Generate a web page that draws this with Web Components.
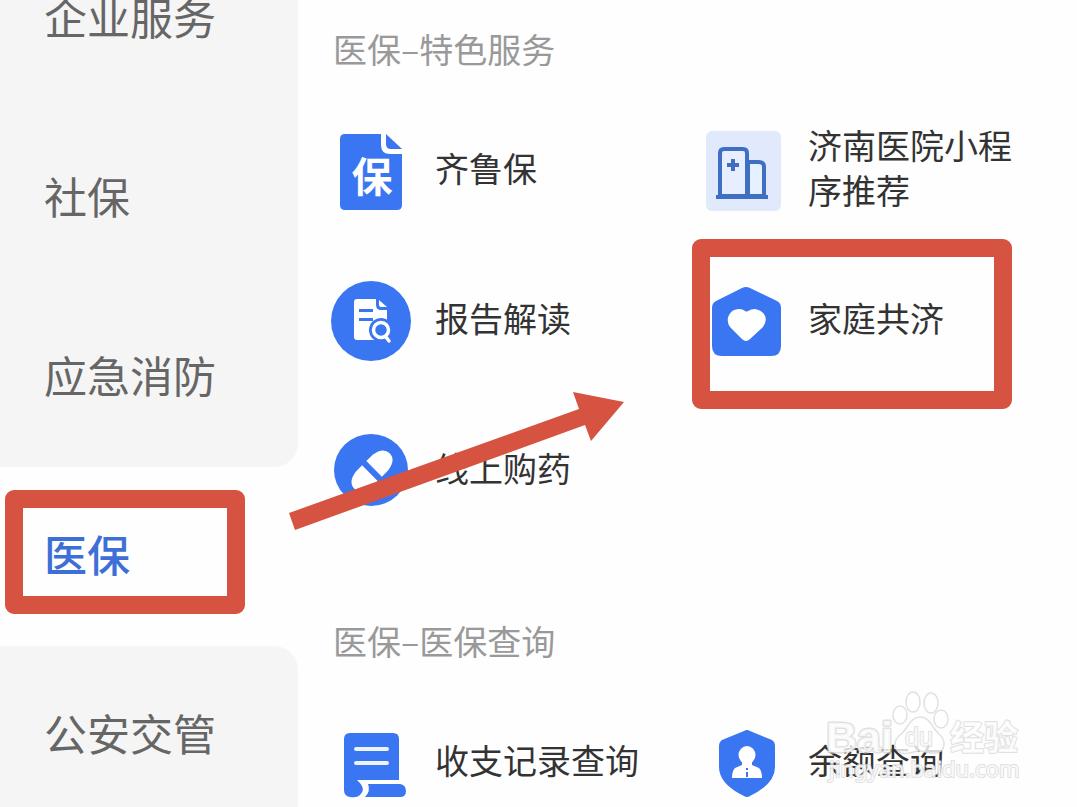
<!DOCTYPE html>
<html lang="zh-CN">
<head>
<meta charset="utf-8">
<meta name="viewport" content="width=device-width, initial-scale=1">
<title>医保服务</title>
<style>
  html, body { height: 100%; }
  body { margin: 0; background: #fefefe; overflow: hidden; font-family: "Noto Sans CJK SC", "Noto Sans", sans-serif; }
</style>
</head>
<body>
<service-page>
  <side-nav slot="nav">
    <side-item>企业服务</side-item>
    <side-item>社保</side-item>
    <side-item before>应急消防</side-item>
    <side-item active>医保</side-item>
    <side-item after>公安交管</side-item>
  </side-nav>
  <service-section heading="医保–特色服务">
    <service-item icon="policy">齐鲁保</service-item>
    <service-item icon="hospital">济南医院小程序推荐</service-item>
    <service-item icon="report">报告解读</service-item>
    <service-item icon="family" marked>家庭共济</service-item>
    <service-item icon="pill">线上购药</service-item>
  </service-section>
  <service-section heading="医保–医保查询">
    <service-item icon="ledger">收支记录查询</service-item>
    <service-item icon="balance">余额查询</service-item>
  </service-section>
  <pointer-arrow slot="overlay"></pointer-arrow>
  <site-watermark slot="overlay"></site-watermark>
</service-page>

<script>
const define = (name, html, setup) => {
  const template = document.createElement('template');
  template.innerHTML = html;
  customElements.define(name, class extends HTMLElement {
    constructor() {
      super();
      this.attachShadow({ mode: 'open' }).append(template.content.cloneNode(true));
    }
    connectedCallback() { if (setup) setup(this, this.shadowRoot); }
  });
};

const icons = {
  policy: `<svg width="80" height="80" viewBox="0 0 80 80">
    <path fill="#3a76f2" d="M14 3H50V14Q50 23 59 23H71V74Q71 79 66 79H14Q9 79 9 74V8Q9 3 14 3Z"/>
    <path fill="#3a76f2" d="M55 3L71 18H60Q55 18 55 13Z"/>
    <text x="41" y="61" text-anchor="middle" font-size="41" font-weight="700" fill="#fff">保</text></svg>`,
  hospital: `<svg width="80" height="80" viewBox="0 0 80 80">
    <rect x="2" y="0" width="75" height="80" rx="6" fill="#e0eafc"/>
    <g fill="none" stroke="#3e6fc2" stroke-width="4" stroke-linejoin="round">
      <path fill="#e6f1ff" d="M44 31H55Q60 31 60 36V65H44Z"/>
      <path fill="#e6eeff" d="M16 65V22Q16 18 20 18H39Q43 18 43 22V65Z"/>
      <path d="M12 66H64M23 34H35M29 28V40"/>
    </g></svg>`,
  report: `<svg width="80" height="80" viewBox="0 0 80 80">
    <circle cx="40" cy="40" r="40" fill="#3a76f2"/>
    <path fill="#fff" d="M26 18H45V24Q45 29 50 29H56V59H26Q23 59 23 56V21Q23 18 26 18Z"/>
    <path fill="#fff" d="M48 19L56 26H50Q48 26 48 24Z"/>
    <path stroke="#3a76f2" stroke-width="3" d="M28 29.500H42M28 38.500H42"/>
    <circle cx="50" cy="49" r="12" fill="#3a76f2"/>
    <circle cx="50" cy="49" r="7.500" fill="#3a76f2" stroke="#fff" stroke-width="3.500"/>
    <path stroke="#fff" stroke-width="3.500" stroke-linecap="round" d="M55 56L58 60"/></svg>`,
  family: `<svg width="80" height="80" viewBox="0 0 80 80">
    <path fill="#3a76f2" d="M38 7Q42 5 46 7L73 20Q77 22 77 27V65Q77 75 67 75H18Q8 75 8 65V27Q8 22 12 20Z"/>
    <path fill="#fff" d="M42 60Q40 60 38 58L26 46Q22 40 25 34Q28 28 35 28Q39 28 41 30Q42 31 44 30Q47 28 51 28Q57 29 60 33Q64 39 59 46L46 58Q44 60 42 60Z"/></svg>`,
  pill: `<svg width="80" height="80" viewBox="0 0 80 80">
    <ellipse cx="40" cy="39" rx="37" ry="36" fill="#3a76f2"/>
    <g transform="translate(41 40) rotate(-45)" fill="#fff">
      <path d="M-3 -11V11H-12Q-25 9 -25 0T-12 -11ZM3 -11V11H12Q25 9 25 0T12 -11Z"/>
    </g></svg>`,
  ledger: `<svg width="80" height="80" viewBox="0 0 80 80">
    <path fill="#3a76f2" d="M19 10H62Q68 10 68 16V57H26Q36 66 29 72Q26 75 19 74Q13 73 13 67V16Q13 10 19 10Z"/>
    <path fill="#3a76f2" d="M37 61H69Q75 62 75 68Q75 74 69 74H34Q40 68 37 61Z"/>
    <path stroke="#eef4ff" stroke-width="4" stroke-linecap="round" d="M25 26H56M25 40H56"/></svg>`,
  balance: `<svg width="80" height="80" viewBox="0 0 80 80">
    <path fill="#3a76f2" d="M40 8Q43 6 46 8L68 17Q71 19 71 23V44Q71 61 46 73Q43 75 40 73Q15 61 15 44V23Q15 19 18 17Z"/>
    <ellipse cx="43" cy="32" rx="8.500" ry="9" fill="#fff"/>
    <path fill="#fff" d="M38 36H48V42L55 45Q58 48 58 55H28Q28 48 31 45L38 42Z"/>
    <path stroke="#3a76f2" stroke-width="2" d="M43 45V47M43 49V54"/></svg>`
};

define('service-page', `
  <style>
    :host { display: grid; grid-template-columns: 298px 1fr; height: 100vh; position: relative; overflow: hidden; }
    main { padding: 8px 0 0 33px; }
  </style>
  <slot name="nav"></slot>
  <main><slot></slot></main>
  <slot name="overlay"></slot>`);

define('side-nav', `
  <style>
    :host { display: block; }
    nav { margin-top: -70px; }
  </style>
  <nav aria-label="服务分类"><slot></slot></nav>`);

define('side-item', `
  <style>
    :host { display: block; position: relative; background: #f5f5f5; }
    :host([before]) { border-bottom-right-radius: 24px; }
    :host([after]) { border-top-right-radius: 24px; }
    :host([active]) { background: transparent; }
    a { display: flex; align-items: center; box-sizing: border-box; height: 179px; padding: 0 0 8px 44px; font-size: 43px; line-height: 60px; color: #666; text-decoration: none; }
    :host([active]) a { color: #3e6fd6; font-weight: 500; }
    .mark { display: none; }
    :host([active]) .mark { display: block; position: absolute; left: 5px; top: 23px; width: 240px; height: 124px; box-sizing: border-box; border: 18px solid #d65342; border-radius: 9px; pointer-events: none; }
  </style>
  <a href="#"><slot></slot></a><div class="mark"></div>`);

define('service-section', `
  <style>
    :host { display: block; margin-bottom: 54px; }
    h2 { box-sizing: border-box; margin: 0; height: 88px; display: flex; align-items: center; padding: 0 0 8px 2px; font-size: 34px; line-height: 45px; font-weight: 400; color: #999; }
    .grid { display: grid; grid-template-columns: 1fr 1fr; grid-auto-rows: 150px; }
  </style>
  <h2></h2><div class="grid"><slot></slot></div>`,
  (host, root) => { root.querySelector('h2').textContent = host.getAttribute('heading'); });

define('service-item', `
  <style>
    :host { display: block; position: relative; }
    a { display: flex; align-items: center; gap: 24px; height: 100%; padding-right: 48px; box-sizing: border-box; font-size: 34px; line-height: 45px; color: #333; text-decoration: none; }
    .icon { flex: none; display: flex; }
    .label { padding-bottom: 8px; }
    .mark { display: none; }
    :host([marked]) .mark { display: block; position: absolute; left: -12px; top: -7px; width: 320px; height: 170px; box-sizing: border-box; border: 18px solid #d65342; border-radius: 9px; pointer-events: none; }
  </style>
  <a href="#"><span class="icon"></span><span class="label"><slot></slot></span></a><div class="mark"></div>`,
  (host, root) => { root.querySelector('.icon').innerHTML = icons[host.getAttribute('icon')]; });

define('pointer-arrow', `
  <style>
    :host { position: absolute; left: 288px; top: 390px; pointer-events: none; }
    svg { display: block; }
  </style>
  <svg width="338" height="142" viewBox="288 390 338 142" aria-hidden="true">
    <path fill="#d65342" d="M289 513L579 409L573 392L624 402L591 441L585 425L295 530Z"/>
  </svg>`);

define('site-watermark', `
  <style>
    :host { position: absolute; right: 52px; bottom: 18px; pointer-events: none; }
    svg { display: block; }
    text { paint-order: stroke; stroke-linejoin: round; }
  </style>
  <svg width="205" height="104" viewBox="820 685 205 104">
    <g fill="#fff" fill-opacity=".8" stroke="#d9d9d9" stroke-opacity=".8" stroke-width="1.500">
      <text x="826" y="752" font-family="Liberation Sans, sans-serif" font-weight="700" font-size="43" stroke-width="3">Bai</text>
      <ellipse cx="900" cy="715" rx="7" ry="9"/>
      <ellipse cx="913" cy="702" rx="7" ry="10"/>
      <ellipse cx="931" cy="703" rx="7" ry="10"/>
      <ellipse cx="941" cy="719" rx="7" ry="9"/>
      <path d="M920 717C930 717 932 728 939 734C947 741 945 752 936 753C928 754 925 751 919 751C913 751 909 755 901 753C893 750 893 741 900 735C908 729 910 717 920 717Z"/>
      <text x="905" y="746" font-family="Liberation Sans, sans-serif" font-size="25" stroke-width="2">du</text>
      <text x="950" y="750" font-family="Noto Sans CJK SC, sans-serif" font-weight="700" font-size="34" stroke-width="2">经验</text>
      <text x="829" y="777" font-family="Noto Sans, sans-serif" font-size="22" stroke-width="2">jingyan.baidu.com</text>
    </g>
  </svg>`);
</script>
</body>
</html>
